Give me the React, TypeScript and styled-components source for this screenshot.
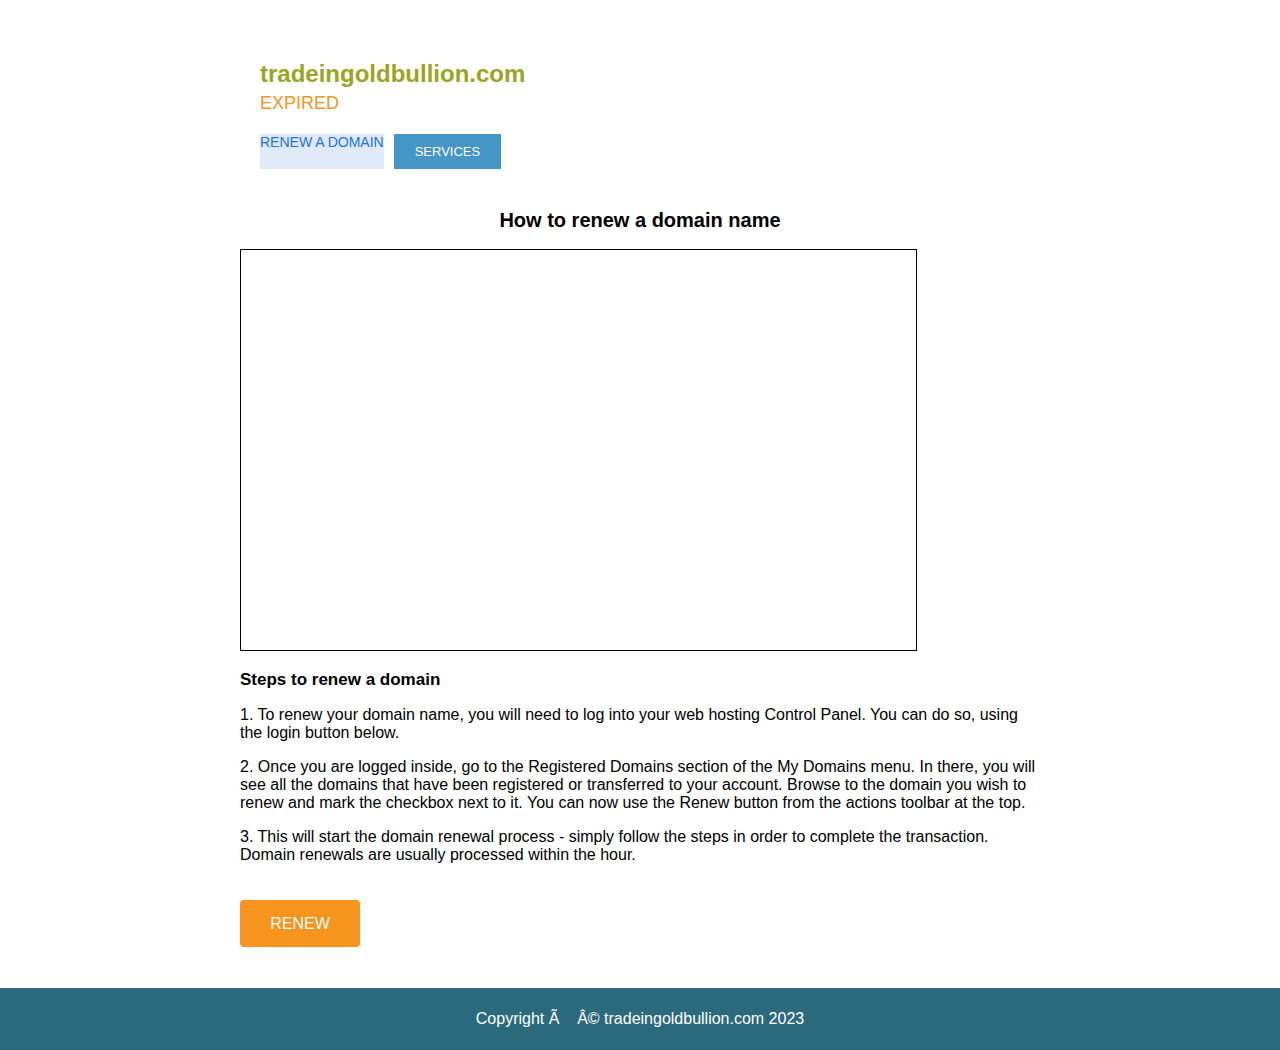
import React from "react";
import styled, { createGlobalStyle } from "styled-components";

const Global = createGlobalStyle`
  html, body { margin: 0; padding: 0; background: #fff; }
  body { font-family: "Liberation Sans", Arial, sans-serif; color: #000; }
`;

const Page = styled.div`
  min-height: 1050px;
  display: flex;
  flex-direction: column;
`;

const Container = styled.main`
  width: 800px;
  margin: 0 auto;
  padding-top: 40px;
  flex: 1;
`;

const Header = styled.header`
  padding: 20px 20px 0;
`;

const Domain = styled.h1`
  margin: 0;
  font-size: 24px;
  line-height: 28px;
  font-weight: bold;
  color: #9aa521;
`;

const Status = styled.div`
  font-size: 18px;
  line-height: 22px;
  color: #f7941d;
  margin-top: 4px;
`;

const Nav = styled.nav`
  display: flex;
  gap: 10px;
  margin-top: 20px;
`;

const NavLink = styled.a<{ $primary?: boolean }>`
  display: flex;
  height: 35px;
  box-sizing: border-box;
  font-size: ${(p) => (p.$primary ? "13px" : "14px")};
  text-decoration: none;
  text-transform: uppercase;
  ${(p) =>
    p.$primary
      ? `background: #4496c6; color: #fff; padding: 0 21px; align-items: center;`
      : `background: #e0e9f8; color: #1a73e8; padding: 0; align-items: flex-start; line-height: 16px;`}
`;

const Title = styled.h2`
  margin: 40px 0 17px;
  text-align: center;
  font-size: 20px;
  line-height: 23px;
  font-weight: bold;
`;

const Video = styled.div`
  width: 675px;
  height: 400px;
  border: 1px solid #000;
`;

const StepsTitle = styled.h3`
  margin: 19px 0 16px;
  font-size: 17px;
  line-height: 20px;
  font-weight: bold;
`;

const Para = styled.p`
  margin: 0 0 16px;
  font-size: 16px;
  line-height: 18px;
`;

const RenewButton = styled.a`
  display: inline-flex;
  align-items: center;
  justify-content: center;
  width: 120px;
  height: 47px;
  margin-top: 20px;
  margin-bottom: 41px;
  border-radius: 4px;
  background: #f7941d;
  color: #fff;
  font-size: 16px;
  text-decoration: none;
`;

const Footer = styled.footer`
  background: #2b697d;
  color: #fff;
  height: 62px;
  display: flex;
  align-items: center;
  justify-content: center;
  font-size: 16px;
`;

export default function App() {
  return (
    <Page>
      <Global />
      <Container>
        <Header>
          <Domain>tradeingoldbullion.com</Domain>
          <Status>EXPIRED</Status>
          <Nav>
            <NavLink href="#">Renew a domain</NavLink>
            <NavLink href="#" $primary>
              Services
            </NavLink>
          </Nav>
        </Header>
        <Title>How to renew a domain name</Title>
        <Video />
        <StepsTitle>Steps to renew a domain</StepsTitle>
        <Para>
          1. To renew your domain name, you will need to log into your web hosting Control Panel. You can do so, using
          the login button below.
        </Para>
        <Para>
          2. Once you are logged inside, go to the Registered Domains section of the My Domains menu. In there, you will
          see all the domains that have been registered or transferred to your account. Browse to the domain you wish to
          renew and mark the checkbox next to it. You can now use the Renew button from the actions toolbar at the top.
        </Para>
        <Para>
          3. This will start the domain renewal process - simply follow the steps in order to complete the transaction.
          Domain renewals are usually processed within the hour.
        </Para>
        <RenewButton href="#">RENEW</RenewButton>
      </Container>
      <Footer>Copyright Ã&nbsp;&nbsp;&nbsp;&nbsp;Â© tradeingoldbullion.com 2023</Footer>
    </Page>
  );
}
